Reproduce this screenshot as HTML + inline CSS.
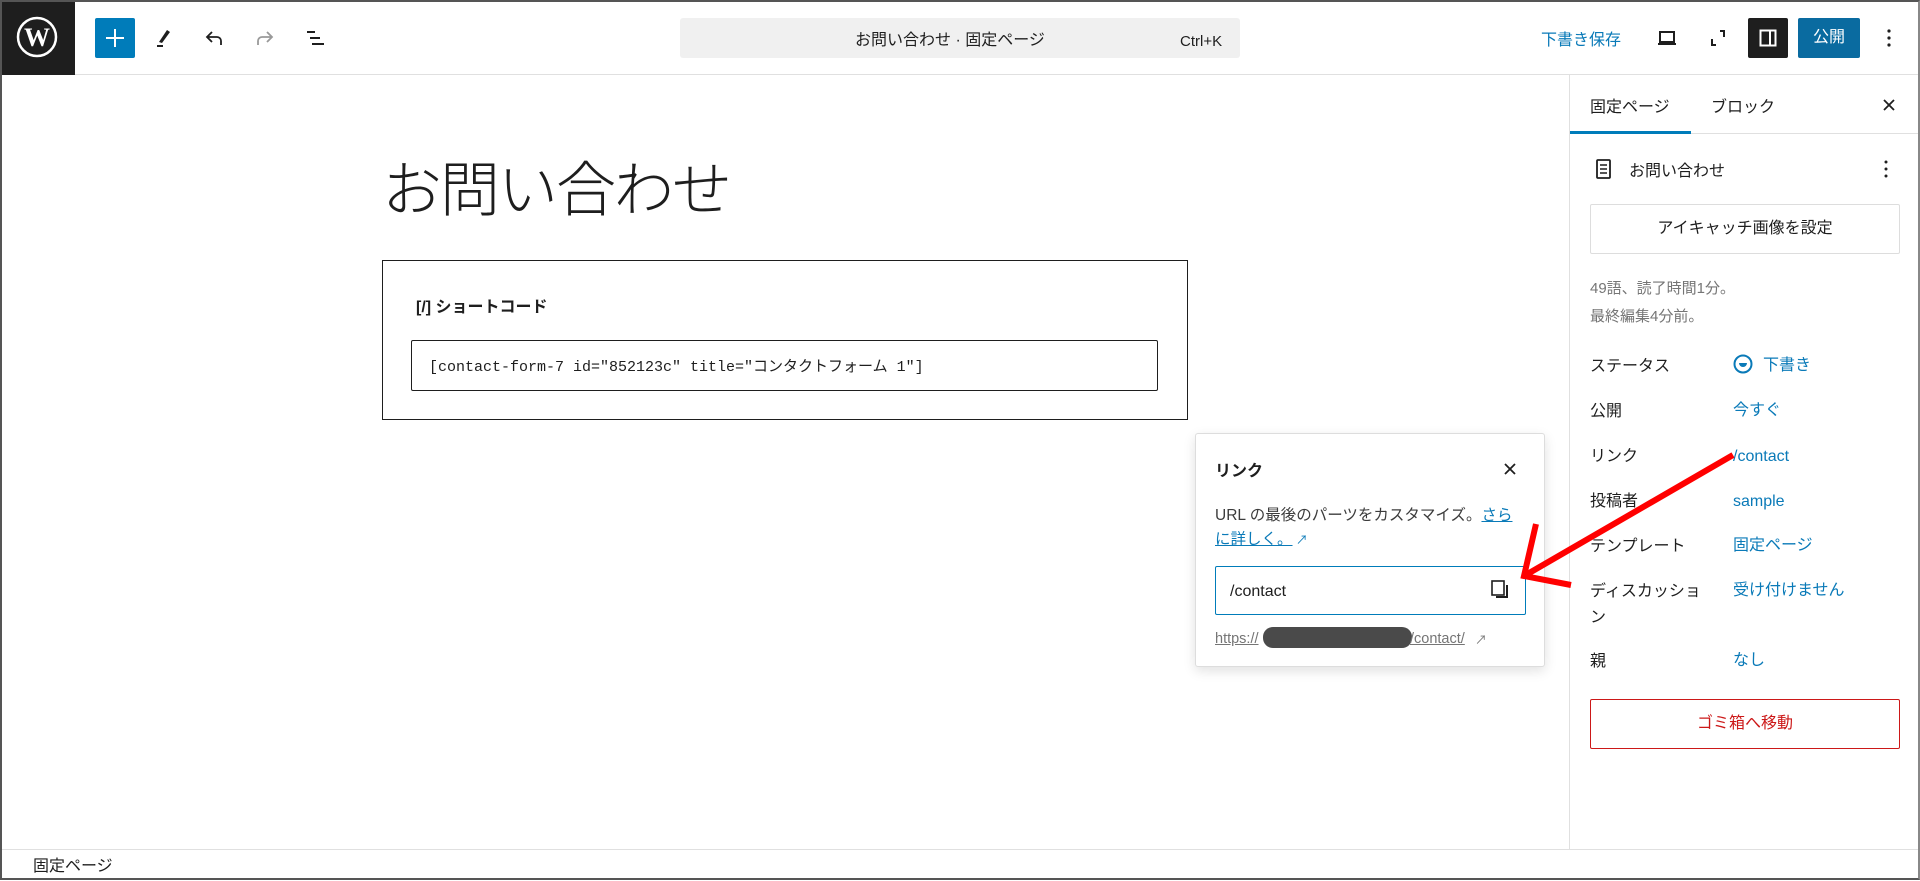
<!DOCTYPE html>
<html><head><meta charset="utf-8"><style>
*{box-sizing:border-box;margin:0;padding:0}
body{width:1920px;height:880px;overflow:hidden;background:#fff;font-family:"Liberation Sans","Noto Sans CJK JP",sans-serif;color:#1e1e1e;position:relative}
.frame{position:absolute;inset:0;border:2px solid #555;border-right-color:#888;pointer-events:none;z-index:50}
.a{position:absolute}
.hdr{position:absolute;left:0;top:0;width:1920px;height:75px;border-bottom:1px solid #e0e0e0}
.t{position:absolute;white-space:nowrap;line-height:28px}
.blue{color:#0a7ab8}
.lbl{font-size:16px;color:#1e1e1e}
.val{font-size:16px;color:#0a7ab8}
</style></head><body>
<div class="frame"></div>
<div class="hdr"></div>
<div class="a" style="left:0;top:0;width:75px;height:75px;background:#1e1e1e"></div>
<svg class="a" style="left:16px;top:16px" width="42" height="42" viewBox="0 0 42 42"><circle cx="21" cy="21" r="19" fill="none" stroke="#fff" stroke-width="2.5"/><text x="21" y="30" font-family="Liberation Serif,serif" font-size="26" font-weight="bold" fill="#fff" text-anchor="middle">W</text></svg>
<div class="a" style="left:95px;top:18px;width:40px;height:40px;background:#007cba;border-radius:2px"></div>
<svg class="a" style="left:95px;top:18px" width="40" height="40"><path d="M20 11v18M11 20h18" stroke="#fff" stroke-width="2"/></svg>
<svg class="a" style="left:152px;top:26px" width="24" height="24"><path d="M15 4l3 2-8 11-3-1z" fill="#1e1e1e"/><path d="M5 20h6" stroke="#1e1e1e" stroke-width="2"/></svg>
<svg class="a" style="left:203px;top:26px" width="24" height="24"><path d="M9 6L4 11l5 5M4 11h10a4 4 0 0 1 4 4v4" fill="none" stroke="#1e1e1e" stroke-width="1.8"/></svg>
<svg class="a" style="left:252px;top:26px" width="24" height="24"><path d="M15 6l5 5-5 5M20 11H10a4 4 0 0 0-4 4v4" fill="none" stroke="#999" stroke-width="1.8"/></svg>
<svg class="a" style="left:304px;top:26px" width="24" height="24"><path d="M3 6h8M6 12h10M8 18h12" stroke="#1e1e1e" stroke-width="2"/></svg>
<div class="a" style="left:680px;top:18px;width:560px;height:40px;background:#f0f0f0;border-radius:3px"></div>
<div class="t" style="left:855px;top:27px;font-size:16px">お問い合わせ · 固定ページ</div>
<div class="t" style="left:1180px;top:28px;font-size:15px">Ctrl+K</div>
<div class="t blue" style="left:1541px;top:27px;font-size:16px">下書き保存</div>
<svg class="a" style="left:1655px;top:26px" width="24" height="24"><path d="M5 6h14v10H5zM3 18h18" fill="none" stroke="#1e1e1e" stroke-width="2"/></svg>
<svg class="a" style="left:1706px;top:26px" width="24" height="24"><path d="M6 13v6h4M18 11V5h-4" fill="none" stroke="#1e1e1e" stroke-width="2"/></svg>
<div class="a" style="left:1748px;top:18px;width:40px;height:40px;background:#1e1e1e;border-radius:2px"></div>
<svg class="a" style="left:1756px;top:26px" width="24" height="24"><rect x="4.5" y="4.5" width="15" height="15" fill="none" stroke="#fff" stroke-width="2"/><path d="M14 5v14" stroke="#fff" stroke-width="2"/></svg>
<div class="a" style="left:1798px;top:18px;width:62px;height:40px;background:#0a6ba0;border-radius:2px;color:#fff;font-size:16px;text-align:center;line-height:40px">公開</div>
<svg class="a" style="left:1881px;top:26px" width="16" height="24"><circle cx="8" cy="5" r="1.6" fill="#1e1e1e"/><circle cx="8" cy="12" r="1.6" fill="#1e1e1e"/><circle cx="8" cy="19" r="1.6" fill="#1e1e1e"/></svg>

<div class="t" style="left:382px;top:156px;font-size:60px;line-height:70px;font-weight:300;letter-spacing:-2px">お問い合わせ</div>
<div class="a" style="left:382px;top:260px;width:806px;height:160px;border:1px solid #1e1e1e"></div>
<div class="t" style="left:416px;top:294px;font-size:16px;font-weight:bold">[/] ショートコード</div>
<div class="a" style="left:411px;top:340px;width:747px;height:51px;border:1px solid #1e1e1e;border-radius:2px"></div>
<div class="t" style="left:429px;top:354px;font-size:15px;font-family:'Liberation Mono','Noto Sans CJK JP',monospace">[contact-form-7 id="852123c" title="コンタクトフォーム 1"]</div>

<div class="a" style="left:1569px;top:75px;width:1px;height:774px;background:#e0e0e0"></div>
<div class="a" style="left:1570px;top:133px;width:350px;height:1px;background:#e0e0e0"></div>
<div class="a" style="left:1570px;top:131px;width:121px;height:3px;background:#007cba"></div>
<div class="t lbl" style="left:1590px;top:94px">固定ページ</div>
<div class="t lbl" style="left:1711px;top:94px">ブロック</div>
<svg class="a" style="left:1879px;top:95px" width="20" height="20"><path d="M5 5l10 10M15 5L5 15" stroke="#1e1e1e" stroke-width="1.8"/></svg>
<svg class="a" style="left:1594px;top:158px" width="20" height="22"><rect x="3" y="2" width="13" height="18" rx="1" fill="none" stroke="#1e1e1e" stroke-width="1.8"/><path d="M6 7h7M6 11h7M6 15h7" stroke="#1e1e1e" stroke-width="1.6"/></svg>
<div class="t lbl" style="left:1629px;top:158px">お問い合わせ</div>
<svg class="a" style="left:1878px;top:157px" width="16" height="24"><circle cx="8" cy="5" r="1.5" fill="#1e1e1e"/><circle cx="8" cy="12" r="1.5" fill="#1e1e1e"/><circle cx="8" cy="19" r="1.5" fill="#1e1e1e"/></svg>
<div class="a" style="left:1590px;top:204px;width:310px;height:50px;border:1px solid #ddd;border-radius:2px;text-align:center;line-height:48px;font-size:16px">アイキャッチ画像を設定</div>
<div class="t" style="left:1590px;top:275px;font-size:15px;color:#757575">49語、読了時間1分。</div>
<div class="t" style="left:1590px;top:303px;font-size:15px;color:#757575">最終編集4分前。</div>
<div class="t lbl" style="left:1590px;top:353px">ステータス</div>
<svg class="a" style="left:1732px;top:353px" width="22" height="22"><circle cx="11" cy="11" r="8.5" fill="none" stroke="#0a7ab8" stroke-width="2"/><path d="M7 10h8a4 4 0 0 1-8 0z" fill="#0a7ab8"/></svg>
<div class="t val" style="left:1763px;top:352px">下書き</div>
<div class="t lbl" style="left:1590px;top:398px">公開</div><div class="t val" style="left:1733px;top:397px">今すぐ</div>
<div class="t lbl" style="left:1590px;top:443px">リンク</div><div class="t val" style="left:1733px;top:443px">/contact</div>
<div class="t lbl" style="left:1590px;top:488px">投稿者</div><div class="t val" style="left:1733px;top:488px">sample</div>
<div class="t lbl" style="left:1590px;top:533px">テンプレート</div><div class="t val" style="left:1733px;top:532px">固定ページ</div>
<div class="t lbl" style="left:1590px;top:578px">ディスカッショ</div><div class="t lbl" style="left:1590px;top:604px">ン</div>
<div class="t val" style="left:1733px;top:577px">受け付けません</div>
<div class="t lbl" style="left:1590px;top:648px">親</div><div class="t val" style="left:1733px;top:647px">なし</div>
<div class="a" style="left:1590px;top:699px;width:310px;height:50px;border:1px solid #cc1818;border-radius:2px;text-align:center;line-height:48px;font-size:16px;color:#cc1818">ゴミ箱へ移動</div>

<div class="a" style="left:1195px;top:433px;width:350px;height:234px;background:#fff;border:1px solid #ddd;border-radius:3px;box-shadow:0 4px 12px rgba(0,0,0,.12)"></div>
<div class="t" style="left:1215px;top:458px;font-size:16px;font-weight:bold">リンク</div>
<svg class="a" style="left:1500px;top:459px" width="20" height="20"><path d="M5 5l10 10M15 5L5 15" stroke="#1e1e1e" stroke-width="1.8"/></svg>
<div class="t" style="left:1215px;top:502px;font-size:15.5px;color:#3c3c3c">URL の最後のパーツをカスタマイズ。<span class="blue" style="text-decoration:underline">さら</span></div>
<div class="t" style="left:1215px;top:526px;font-size:15.5px"><span class="blue" style="text-decoration:underline">に詳しく。</span><span style="color:#0a7ab8;font-size:12px"> ↗</span></div>
<div class="a" style="left:1215px;top:566px;width:311px;height:49px;border:1.5px solid #007cba;border-radius:2px"></div>
<div class="t" style="left:1230px;top:578px;font-size:16px">/contact</div>
<svg class="a" style="left:1488px;top:578px" width="24" height="24"><rect x="4" y="3" width="12" height="14" fill="none" stroke="#1e1e1e" stroke-width="1.6"/><path d="M19 7v12H8" fill="none" stroke="#1e1e1e" stroke-width="2"/></svg>
<div class="t" style="left:1215px;top:625px;font-size:14.5px;color:#757575;text-decoration:underline">https://</div>
<div class="a" style="left:1263px;top:627px;width:149px;height:21px;background:#4a4a4a;border-radius:10px"></div>
<div class="t" style="left:1410px;top:625px;font-size:14.5px;color:#757575;text-decoration:underline">/contact/</div>
<div class="t" style="left:1475px;top:626px;font-size:12px;color:#757575">↗</div>

<svg class="a" style="left:0;top:0" width="1920" height="880"><path d="M1733 455L1524 576M1536 524L1524 576 1571 585" fill="none" stroke="#f00" stroke-width="6"/></svg>

<div class="a" style="left:0;top:849px;width:1920px;height:1px;background:#e0e0e0"></div>
<div class="t" style="left:33px;top:853px;font-size:16px">固定ページ</div>
</body></html>
